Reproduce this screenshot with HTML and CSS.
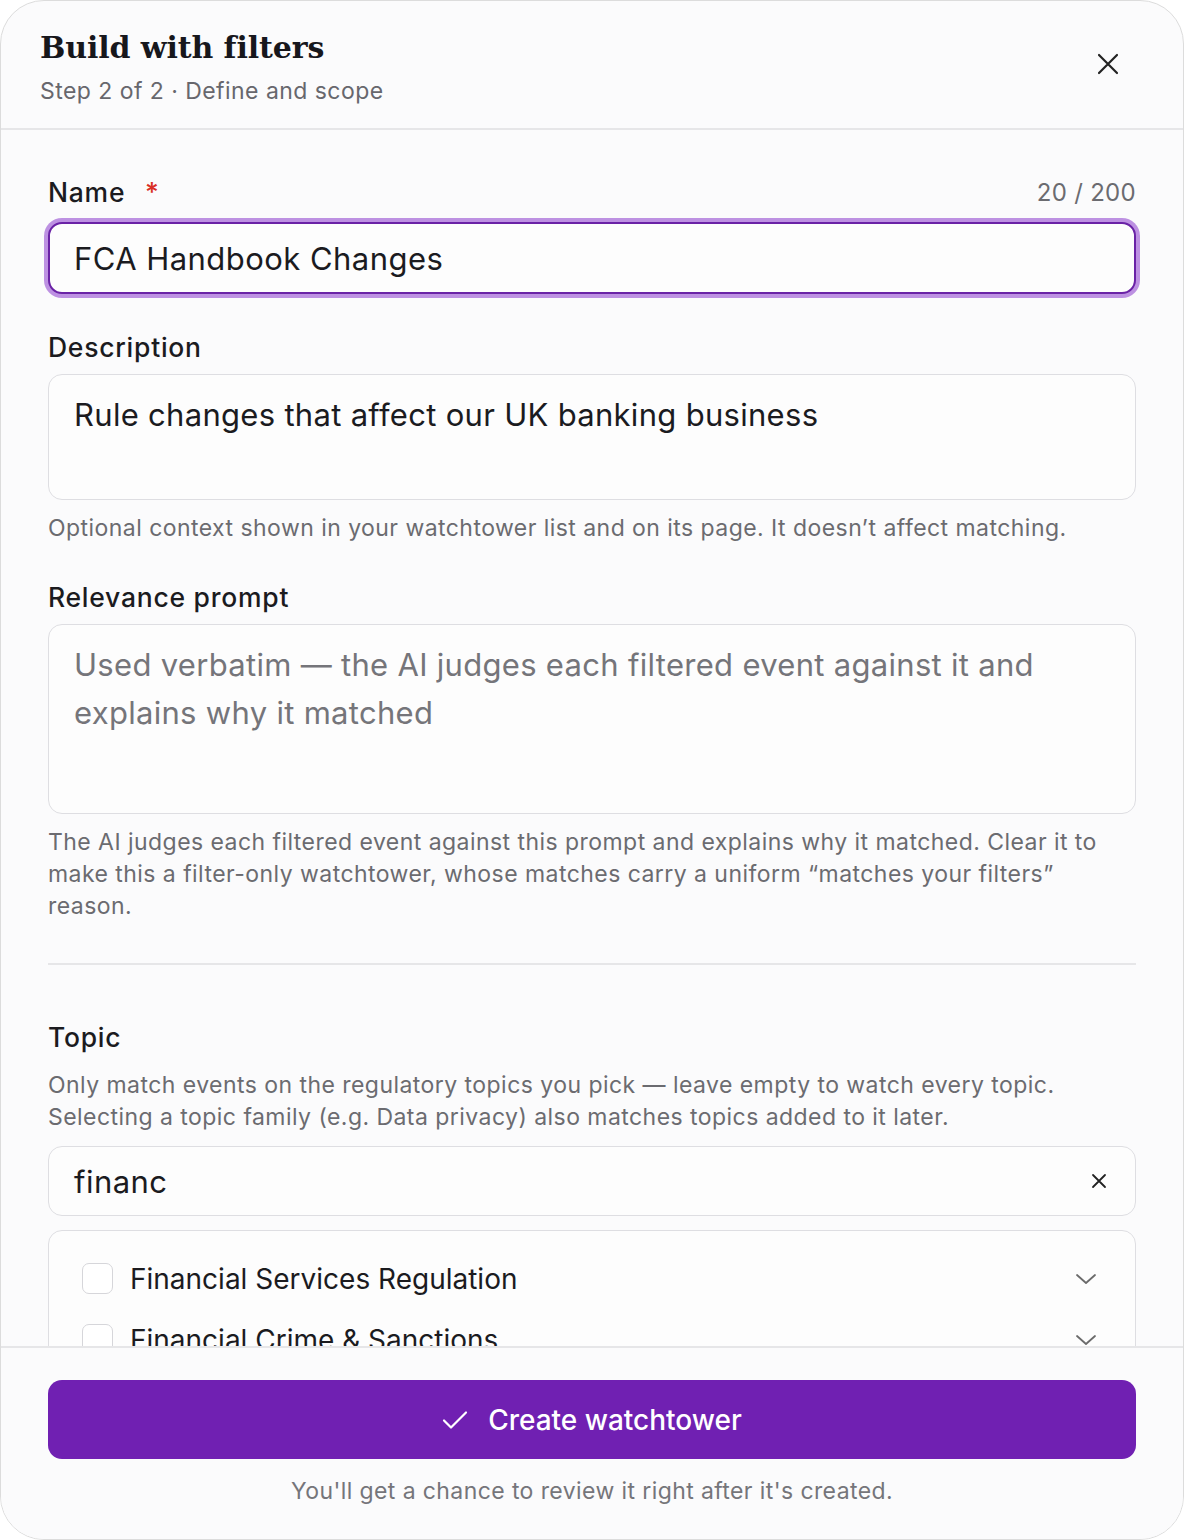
FILE: index.html
```html
<!DOCTYPE html>
<html lang="en">
<head>
<meta charset="utf-8">
<title>Build with filters</title>
<link rel="stylesheet" href="styles.css">
</head>
<body>
<div class="modal">
  <header class="modal-head">
    <div class="head-text">
      <h1 class="title">Build with filters</h1>
      <p class="subtitle">Step 2 of 2 · Define and scope</p>
    </div>
    <button class="close" aria-label="Close">
      <svg width="22" height="22" viewBox="0 0 22 22"><path d="M2 2L20 20M20 2L2 20" stroke="#222" stroke-width="2.2" stroke-linecap="round"/></svg>
    </button>
  </header>

  <main class="modal-body">
    <div class="label-row">
      <label class="label">Name <span class="req">*</span></label>
      <span class="counter">20 / 200</span>
    </div>
    <div class="input focused">FCA Handbook Changes</div>

    <label class="label spaced">Description</label>
    <div class="textarea desc">Rule changes that affect our UK banking business</div>
    <p class="help">Optional context shown in your watchtower list and on its page. It doesn’t affect matching.</p>

    <label class="label spaced">Relevance prompt</label>
    <div class="textarea prompt placeholder">Used verbatim — the AI judges each filtered event against it and explains why it matched</div>
    <p class="help">The AI judges each filtered event against this prompt and explains why it matched. Clear it to make this a filter-only watchtower, whose matches carry a uniform “matches your filters” reason.</p>

    <hr class="divider">

    <label class="label topic">Topic</label>
    <p class="help tight">Only match events on the regulatory topics you pick — leave empty to watch every topic. Selecting a topic family (e.g. Data privacy) also matches topics added to it later.</p>

    <div class="input search">
      <span>financ</span>
      <svg class="clear" width="16" height="16" viewBox="0 0 16 16"><path d="M2 2L14 14M14 2L2 14" stroke="#222" stroke-width="1.8" stroke-linecap="round"/></svg>
    </div>

    <div class="listbox">
      <div class="option">
        <span class="check"></span>
        <span class="opt-label">Financial Services Regulation</span>
        <svg class="chev" width="22" height="12" viewBox="0 0 22 12"><path d="M2 2L11 10L20 2" fill="none" stroke="#6b6b6b" stroke-width="1.8" stroke-linecap="round" stroke-linejoin="round"/></svg>
      </div>
      <div class="option">
        <span class="check"></span>
        <span class="opt-label">Financial Crime &amp; Sanctions</span>
        <svg class="chev" width="22" height="12" viewBox="0 0 22 12"><path d="M2 2L11 10L20 2" fill="none" stroke="#6b6b6b" stroke-width="1.8" stroke-linecap="round" stroke-linejoin="round"/></svg>
      </div>
    </div>
  </main>

  <footer class="modal-foot">
    <button class="primary">
      <svg width="26" height="20" viewBox="0 0 26 20"><path d="M2 10.5L9 17.5L24 2.5" fill="none" stroke="#fff" stroke-width="2.2" stroke-linecap="round" stroke-linejoin="round"/></svg>
      <span>Create watchtower</span>
    </button>
    <p class="foot-note">You'll get a chance to review it right after it's created.</p>
  </footer>
</div>
</body>
</html>
```

FILE: styles.css
```css
* { box-sizing: border-box; }
html, body { margin: 0; padding: 0; }
body {
  background: #ffffff;
  font-family: Inter, "Noto Sans", sans-serif;
  color: #1b1b1f;
}
.modal {
  width: 1184px;
  height: 1540px;
  background: #fbfbfc;
  border: 1px solid #dcdcdc;
  border-radius: 44px;
  overflow: hidden;
  display: flex;
  flex-direction: column;
}
.modal-head {
  flex: none;
  height: 129px;
  border-bottom: 2px solid #e6e6e8;
  display: flex;
  justify-content: space-between;
  align-items: flex-start;
  padding: 26px 64px 0 39px;
}
.title {
  margin: 0;
  font-family: "DejaVu Serif", "Liberation Serif", serif;
  font-weight: 700;
  font-size: 30px;
  line-height: 42px;
  letter-spacing: -0.1px;
  color: #17171c;
}
.subtitle {
  margin: 6px 0 0 0;
  font-size: 23px;
  line-height: 32px;
  letter-spacing: 0.45px;
  color: #67676d;
}
.close {
  margin-top: 26px;
  background: none;
  border: 0;
  padding: 0;
  width: 22px;
  height: 22px;
  display: flex;
}
.modal-body {
  flex: 1;
  overflow: hidden;
  padding: 45px 47px 0 47px;
}
.label-row {
  display: flex;
  justify-content: space-between;
  align-items: center;
}
.label {
  display: block;
  font-size: 26.5px;
  line-height: 34px;
  font-weight: 500;
  letter-spacing: 0.75px;
  color: #1b1b1f;
}
.req { color: #d93025; margin-left: 12px; }
.counter {
  font-size: 24px;
  color: #6b6b70;
  letter-spacing: 0.3px;
}
.input {
  margin-top: 13px;
  height: 72px;
  background: #fdfdfd;
  border: 1px solid #dedee2;
  border-radius: 14px;
  padding: 0 25px;
  display: flex;
  align-items: center;
  font-size: 31px;
  letter-spacing: 0.45px;
  color: #1b1b1f;
}
.input.focused {
  border: 2px solid #6a22a6;
  box-shadow: 0 0 0 4px #bd91e2;
  padding-left: 24px;
}
.spaced { margin-top: 36px; }
.textarea {
  margin-top: 10px;
  background: #fdfdfd;
  border: 1px solid #dedee2;
  border-radius: 14px;
  padding: 16px 25px;
  font-size: 31px;
  line-height: 48px;
  letter-spacing: 0.3px;
  color: #1b1b1f;
}
.desc { height: 126px; }
.prompt { height: 190px; }
.placeholder { color: #75757a; }
.help {
  margin: 12px 0 0;
  font-size: 23px;
  line-height: 32px;
  letter-spacing: 0.45px;
  color: #6b6b70;
}
.divider {
  margin: 41px 0 0;
  border: 0;
  border-top: 2px solid #e6e6e8;
}
.topic { margin-top: 55px; }
.help.tight { margin-top: 15px; }
.search {
  margin-top: 13px;
  height: 70px;
  justify-content: space-between;
  padding-right: 28px;
}
.listbox {
  margin-top: 14px;
  border: 1px solid #dedee2;
  border-radius: 14px;
  background: #fdfdfd;
  padding: 17px 38px 0 33px;
  height: 200px;
}
.option {
  display: flex;
  align-items: center;
  height: 61px;
}
.check {
  width: 31px;
  height: 31px;
  border: 1.5px solid #d6d6da;
  border-radius: 7px;
  background: #fff;
  flex: none;
}
.opt-label {
  margin-left: 17px;
  font-size: 28px;
  flex: 1;
}
.chev { flex: none; }
.modal-foot {
  flex: none;
  height: 193px;
  border-top: 2px solid #e6e6e8;
  padding: 32px 47px 0;
  background: #fbfbfc;
}
.primary {
  width: 100%;
  height: 79px;
  border: 0;
  border-radius: 14px;
  background: #7020b2;
  color: #fff;
  font-family: Inter, "Noto Sans", sans-serif;
  font-size: 28px;
  font-weight: 500;
  display: flex;
  align-items: center;
  justify-content: center;
  gap: 20px;
}
.foot-note {
  margin: 16px 0 0;
  text-align: center;
  font-size: 23px;
  line-height: 32px;
  letter-spacing: 0.4px;
  color: #75757a;
}
```
